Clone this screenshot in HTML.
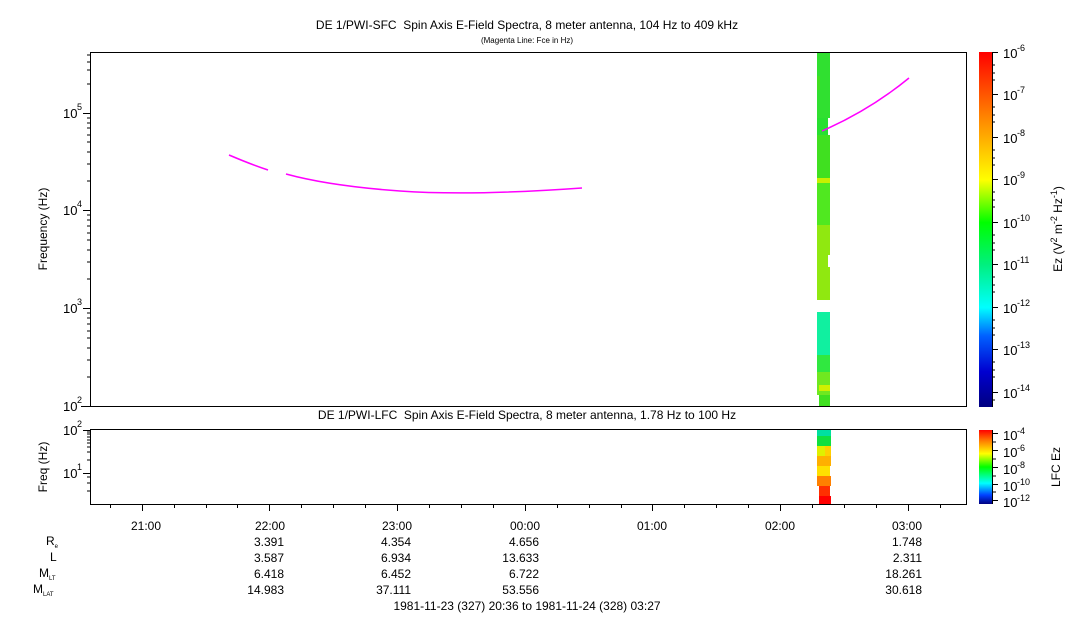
<!DOCTYPE html>
<html><head><meta charset="utf-8"><style>
body{margin:0;background:#fff;width:1083px;height:620px;overflow:hidden}
svg text{font-family:"Liberation Sans",sans-serif;fill:#000}
</style></head><body>
<svg width="1083" height="620" viewBox="0 0 1083 620" xmlns="http://www.w3.org/2000/svg">
<defs>
<linearGradient id="cb1" x1="0" y1="1" x2="0" y2="0">
<stop offset="0" stop-color="#000080"/><stop offset="0.1" stop-color="#0000d0"/><stop offset="0.2" stop-color="#0060ff"/>
<stop offset="0.28" stop-color="#00ffff"/><stop offset="0.4" stop-color="#00f080"/><stop offset="0.52" stop-color="#00ff00"/>
<stop offset="0.64" stop-color="#ffff00"/><stop offset="0.8" stop-color="#ff9000"/><stop offset="1" stop-color="#ff0000"/>
</linearGradient>
<linearGradient id="cb2" x1="0" y1="1" x2="0" y2="0">
<stop offset="0" stop-color="#000080"/><stop offset="0.12" stop-color="#0040ff"/><stop offset="0.28" stop-color="#00ffff"/>
<stop offset="0.5" stop-color="#00ff00"/><stop offset="0.68" stop-color="#ffff00"/><stop offset="0.85" stop-color="#ff8000"/><stop offset="1" stop-color="#ff0000"/>
</linearGradient>
</defs>
<text x="527" y="29" font-size="12" text-anchor="middle">DE 1/PWI-SFC &#160;Spin Axis E-Field Spectra, 8 meter antenna, 104 Hz to 409 kHz</text>
<text x="527" y="43" font-size="8" text-anchor="middle">(Magenta Line: Fce in Hz)</text>
<text x="527" y="419" font-size="12" text-anchor="middle">DE 1/PWI-LFC &#160;Spin Axis E-Field Spectra, 8 meter antenna, 1.78 Hz to 100 Hz</text>

<g shape-rendering="crispEdges">
<rect x="817" y="52" width="13" height="66" fill="#30e030"/>
<rect x="817" y="76" width="3" height="14" fill="#40e020"/>
<rect x="828" y="118" width="2" height="17" fill="#fff"/>
<rect x="817" y="118" width="11" height="17" fill="#28e030"/>
<rect x="817" y="135" width="13" height="43" fill="#40e020"/>
<rect x="817" y="178" width="13" height="5" fill="#c8f000"/>
<rect x="817" y="183" width="13" height="42" fill="#50e820"/>
<rect x="817" y="225" width="13" height="75" fill="#90e810"/>
<rect x="828" y="255" width="2" height="12" fill="#fff"/>
<rect x="817" y="312" width="13" height="43" fill="#10f0a0"/>
<rect x="817" y="355" width="13" height="17" fill="#30e840"/>
<rect x="817" y="372" width="13" height="23" fill="#70e820"/>
<rect x="819" y="385" width="11" height="6" fill="#d0f000"/>
<rect x="819" y="395" width="11" height="12" fill="#40e020"/>
<rect x="817" y="430" width="14" height="6" fill="#00e0a0"/>
<rect x="817" y="436" width="14" height="10" fill="#10e040"/>
<rect x="817" y="446" width="14" height="10" fill="#e0f000"/>
<rect x="825" y="446" width="6" height="10" fill="#ffd000"/>
<rect x="817" y="456" width="14" height="10" fill="#ffb000"/>
<rect x="817" y="466" width="13" height="10" fill="#ffe000"/>
<rect x="817" y="476" width="14" height="10" fill="#ff8000"/>
<rect x="819" y="486" width="11" height="10" fill="#ff3000"/>
<rect x="819" y="496" width="12" height="8" fill="#ff0000"/>
</g>
<g fill="none" stroke="#ff00ff" stroke-width="1.5">
<path d="M229,155 Q250,164 268,170"/>
<path d="M286,174 Q330,186 400,191 Q470,196 582,188"/>
<path d="M822,131 Q870,110 909,78"/>
</g>
<g fill="none" stroke="#000" stroke-width="1" shape-rendering="crispEdges">
<rect x="90.5" y="52.5" width="876" height="354"/>
<rect x="90.5" y="429.5" width="876" height="75"/>
</g>
<g stroke="#000" stroke-width="1" shape-rendering="crispEdges">
<path d="M83,113.5h7M83,210.5h7M83,308.5h7M81,406.5h9"/>
<path d="M87,84h3M87,70h3M87,62h3M87,55h3M87,181h3M87,164h3M87,152h3M87,142h3M87,135h3M87,128h3M87,123h3M87,118h3M87,279h3M87,262h3M87,250h3M87,240h3M87,233h3M87,226h3M87,220h3M87,215h3M87,377h3M87,360h3M87,348h3M87,338h3M87,331h3M87,324h3M87,318h3M87,313h3"/>
<path d="M83,430.5h7M83,473.5h7"/>
<path d="M87,491h3M87,483h3M87,477h3M87,460h3M87,452h3M87,447h3M87,443h3M87,440h3M87,437h3M87,434h3M87,432h3"/>
<path d="M142.5,504v7M269.5,504v7M397.5,504v7M525.5,504v7M652.5,504v7M780.5,504v7M908.5,504v7"/>
<path d="M110.5,504v4M174.5,504v4M206.5,504v4M237.5,504v4M301.5,504v4M333.5,504v4M365.5,504v4M429.5,504v4M461.5,504v4M493.5,504v4M557.5,504v4M589.5,504v4M621.5,504v4M684.5,504v4M716.5,504v4M748.5,504v4M812.5,504v4M844.5,504v4M876.5,504v4M940.5,504v4"/>
</g>
<g font-size="13">
<text x="63" y="118">10</text><text x="77" y="110" font-size="9">5</text>
<text x="63" y="215">10</text><text x="77" y="207" font-size="9">4</text>
<text x="63" y="313">10</text><text x="77" y="305" font-size="9">3</text>
<text x="63" y="411">10</text><text x="77" y="403" font-size="9">2</text>
<text x="63" y="435">10</text><text x="77" y="427" font-size="9">2</text>
<text x="63" y="478">10</text><text x="77" y="470" font-size="9">1</text>
</g>
<text transform="translate(47,229) rotate(-90)" font-size="12" text-anchor="middle">Frequency (Hz)</text>
<text transform="translate(47,467) rotate(-90)" font-size="12" text-anchor="middle">Freq (Hz)</text>
<rect x="979" y="52" width="13" height="355" fill="url(#cb1)"/>
<rect x="979" y="430" width="13" height="74" fill="url(#cb2)"/>
<g stroke="#000" shape-rendering="crispEdges">
<path d="M992.5,52v355"/>
<path d="M992,52.5h6M992,94.5h6M992,137.5h6M992,179.5h6M992,222.5h6M992,264.5h6M992,307.5h6M992,349.5h6M992,392.5h6"/>
<path d="M992,65h3M992,73h3M992,80h3M992,107h3M992,115h3M992,122h3M992,150h3M992,158h3M992,165h3M992,192h3M992,200h3M992,207h3M992,235h3M992,243h3M992,250h3M992,277h3M992,285h3M992,292h3M992,320h3M992,328h3M992,335h3M992,362h3M992,370h3M992,377h3M992,400h3"/>
<path d="M992.5,430v74"/>
<path d="M992,433.5h6M992,450.5h6M992,467.5h6M992,484.5h6M992,500.5h6M992,442h4M992,459h4M992,476h4M992,492h4"/>
</g>
<g font-size="13">
<text x="1003" y="58">10</text><text x="1017" y="51" font-size="9">-6</text>
<text x="1003" y="100">10</text><text x="1017" y="93" font-size="9">-7</text>
<text x="1003" y="143">10</text><text x="1017" y="136" font-size="9">-8</text>
<text x="1003" y="185">10</text><text x="1017" y="178" font-size="9">-9</text>
<text x="1003" y="228">10</text><text x="1017" y="221" font-size="9">-10</text>
<text x="1003" y="270">10</text><text x="1017" y="263" font-size="9">-11</text>
<text x="1003" y="313">10</text><text x="1017" y="306" font-size="9">-12</text>
<text x="1003" y="355">10</text><text x="1017" y="348" font-size="9">-13</text>
<text x="1003" y="398">10</text><text x="1017" y="391" font-size="9">-14</text>
<text x="1003" y="440">10</text><text x="1017" y="434" font-size="9">-4</text>
<text x="1003" y="457">10</text><text x="1017" y="451" font-size="9">-6</text>
<text x="1003" y="474">10</text><text x="1017" y="468" font-size="9">-8</text>
<text x="1003" y="491">10</text><text x="1017" y="485" font-size="9">-10</text>
<text x="1003" y="507">10</text><text x="1017" y="501" font-size="9">-12</text>
</g>
<text transform="translate(1062,229) rotate(-90)" font-size="12" text-anchor="middle">Ez (V<tspan font-size="9" dy="-5">2</tspan><tspan dy="5"> m</tspan><tspan font-size="9" dy="-5">-2</tspan><tspan dy="5"> Hz</tspan><tspan font-size="9" dy="-5">-1</tspan><tspan dy="5">)</tspan></text>
<text transform="translate(1060,467) rotate(-90)" font-size="12" text-anchor="middle">LFC Ez</text>
<g font-size="12" text-anchor="middle">
<text x="146" y="530">21:00</text><text x="270" y="530">22:00</text><text x="397" y="530">23:00</text><text x="525" y="530">00:00</text><text x="652" y="530">01:00</text><text x="780" y="530">02:00</text><text x="907" y="530">03:00</text>
</g>
<g font-size="12" text-anchor="end">
<text x="284" y="546">3.391</text><text x="411" y="546">4.354</text><text x="539" y="546">4.656</text><text x="922" y="546">1.748</text>
<text x="284" y="562">3.587</text><text x="411" y="562">6.934</text><text x="539" y="562">13.633</text><text x="922" y="562">2.311</text>
<text x="284" y="578">6.418</text><text x="411" y="578">6.452</text><text x="539" y="578">6.722</text><text x="922" y="578">18.261</text>
<text x="284" y="594">14.983</text><text x="411" y="594">37.111</text><text x="539" y="594">53.556</text><text x="922" y="594">30.618</text>
</g>
<g font-size="12">
<text x="46" y="545">R<tspan font-size="6" dy="3">e</tspan></text>
<text x="50" y="561">L</text>
<text x="39" y="577">M<tspan font-size="6" dy="3">LT</tspan></text>
<text x="33" y="593">M<tspan font-size="6" dy="3">LAT</tspan></text>
</g>
<text x="527" y="610" font-size="12" text-anchor="middle">1981-11-23 (327) 20:36 to 1981-11-24 (328) 03:27</text>
</svg>
</body></html>
